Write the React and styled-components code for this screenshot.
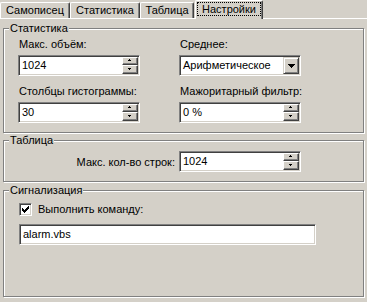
import React from 'react';
import styled, { createGlobalStyle } from 'styled-components';

const Global = createGlobalStyle`
  html, body { margin: 0; padding: 0; background: #D4D0C8; }
  body { font-family: "Liberation Sans", Arial, sans-serif; font-size: 11px; color: #000; }
  * { box-sizing: border-box; }
`;

const Window = styled.div`
  width: 367px;
  height: 302px;
  display: flex;
  flex-direction: column;
  background: #D4D0C8;
  overflow: hidden;
`;

const TabBar = styled.div`
  display: flex;
  align-items: flex-end;
  height: 18px;
  position: relative;
  z-index: 1;
`;

const Tab = styled.div`
  width: ${p => p.$w}px;
  height: ${p => (p.$active ? 19 : 16)}px;
  margin-left: ${p => (p.$active ? 1 : 0)}px;
  margin-bottom: ${p => (p.$active ? -1 : 0)}px;
  padding-bottom: ${p => (p.$active ? 2 : 0)}px;
  background: #D4D0C8;
  border-top: 1px solid #fff;
  border-left: 1px solid #fff;
  border-right: 1px solid #404040;
  border-radius: 2px 2px 0 0;
  box-shadow: inset -1px 0 0 #808080;
  display: flex;
  align-items: center;
  justify-content: center;
  line-height: 13px;
  white-space: nowrap;
`;

const Focus = styled.span`
  flex: 1;
  align-self: stretch;
  margin: 1px 1px 1px 1px;
  border: 1px dotted #000;
  display: flex;
  align-items: center;
  justify-content: center;
`;

const Panel = styled.div`
  flex: 1;
  border-top: 1px solid #fff;
  display: flex;
  flex-direction: column;
  padding: 9px 3px 5px 3px;
`;

const Group = styled.section`
  border: 1px solid #808080;
  box-shadow: inset 1px 1px 0 #fff, 1px 1px 0 #fff;
  display: flex;
  flex-direction: column;
  margin-top: ${p => p.$mt || 0}px;
  ${p => (p.$grow ? 'flex: 1;' : '')}
`;

const Legend = styled.div`
  align-self: flex-start;
  margin: -7px 0 0 5px;
  padding: 0 1px;
  height: 13px;
  line-height: 13px;
  background: #D4D0C8;
`;

const FieldGrid = styled.div`
  display: grid;
  grid-template-columns: 122px 122px;
  column-gap: 39px;
  row-gap: 9px;
  padding: 3px 0 9px 14px;
`;

const Field = styled.div`
  display: flex;
  flex-direction: column;
`;

const Label = styled.div`
  height: 13px;
  line-height: 13px;
  padding-left: 1px;
  margin-bottom: 4px;
  white-space: nowrap;
`;

const Sunken = styled.div`
  width: ${p => p.$w}px;
  height: 21px;
  background: #fff;
  border-top: 1px solid #808080;
  border-left: 1px solid #808080;
  border-right: 1px solid #fff;
  border-bottom: 1px solid #fff;
  box-shadow: inset 1px 1px 0 #404040, inset -1px -1px 0 #D4D0C8;
  padding: 1px;
  display: flex;
  align-items: stretch;
`;

const Value = styled.div`
  flex: 1;
  padding-left: 2px;
  line-height: 17px;
  white-space: nowrap;
  overflow: hidden;
`;

const SpinCol = styled.div`
  width: 16px;
  display: flex;
  flex-direction: column;
`;

const SpinBtn = styled.div`
  height: ${p => (p.$h ? `${p.$h}px` : 'auto')};
  ${p => (p.$h ? '' : 'flex: 1;')}
  background: #D4D0C8;
  border-top: 1px solid #fff;
  border-left: 1px solid #fff;
  border-right: 1px solid #404040;
  border-bottom: 1px solid #404040;
  box-shadow: inset -1px -1px 0 #808080;
  display: flex;
  align-items: center;
  justify-content: center;
  padding: 0 1px 1px 0;
`;

const DropBtn = styled.div`
  width: 16px;
  background: #D4D0C8;
  border-top: 1px solid #D4D0C8;
  border-left: 1px solid #D4D0C8;
  border-right: 1px solid #404040;
  border-bottom: 1px solid #404040;
  box-shadow: inset 1px 1px 0 #fff, inset -1px -1px 0 #808080;
  display: flex;
  align-items: center;
  justify-content: center;
`;

const TableRow = styled.div`
  display: flex;
  justify-content: flex-end;
  align-items: center;
  padding: 4px 62px 9px 0;
`;

const InlineLabel = styled.div`
  margin-right: 4px;
  white-space: nowrap;
`;

const AlarmBody = styled.div`
  display: flex;
  flex-direction: column;
  padding: 6px 0 0 15px;
`;

const CheckRow = styled.label`
  display: flex;
  align-items: center;
  height: 13px;
  gap: 6px;
  line-height: 13px;
`;

const CheckBox = styled.span`
  width: 13px;
  height: 13px;
  background: #fff;
  border-top: 1px solid #808080;
  border-left: 1px solid #808080;
  border-right: 1px solid #fff;
  border-bottom: 1px solid #fff;
  box-shadow: inset 1px 1px 0 #404040, inset -1px -1px 0 #D4D0C8;
  display: flex;
  align-items: center;
  justify-content: center;
`;

const TextRow = styled.div`
  margin-top: 8px;
`;

const ArrowUp = () => (
  <svg width="5" height="3" viewBox="0 0 5 3" shapeRendering="crispEdges">
    <rect x="2" y="0" width="1" height="1" fill="#000" />
    <rect x="1" y="1" width="3" height="1" fill="#000" />
  </svg>
);

const ArrowDown = () => (
  <svg width="5" height="3" viewBox="0 0 5 3" shapeRendering="crispEdges">
    <rect x="1" y="0" width="3" height="1" fill="#000" />
    <rect x="2" y="1" width="1" height="1" fill="#000" />
  </svg>
);

const ComboArrow = () => (
  <svg width="7" height="4" viewBox="0 0 7 4" shapeRendering="crispEdges">
    <rect x="0" y="0" width="7" height="1" fill="#000" />
    <rect x="1" y="1" width="5" height="1" fill="#000" />
    <rect x="2" y="2" width="3" height="1" fill="#000" />
    <rect x="3" y="3" width="1" height="1" fill="#000" />
  </svg>
);

const checkCols = [2, 3, 4, 3, 2, 1, 0];
const CheckMark = () => (
  <svg width="7" height="7" viewBox="0 0 7 7" shapeRendering="crispEdges">
    {checkCols.map((y, x) => (
      <rect key={x} x={x} y={y} width="1" height="3" fill="#000" />
    ))}
  </svg>
);

const SpinBox = ({ value, w = 122 }) => (
  <Sunken $w={w}>
    <Value>{value}</Value>
    <SpinCol>
      <SpinBtn $h={8}><ArrowUp /></SpinBtn>
      <SpinBtn><ArrowDown /></SpinBtn>
    </SpinCol>
  </Sunken>
);

const Combo = ({ value, w = 122 }) => (
  <Sunken $w={w}>
    <Value>{value}</Value>
    <DropBtn><ComboArrow /></DropBtn>
  </Sunken>
);

const tabs = [
  { label: 'Самописец', w: 70 },
  { label: 'Статистика', w: 70 },
  { label: 'Таблица', w: 54 },
  { label: 'Настройки', w: 68, active: true },
];

export default function App() {
  return (
    <>
      <Global />
      <Window>
        <TabBar>
          {tabs.map(t => (
            <Tab key={t.label} $w={t.w} $active={t.active}>
              {t.active ? <Focus>{t.label}</Focus> : t.label}
            </Tab>
          ))}
        </TabBar>
        <Panel>
          <Group>
            <Legend>Статистика</Legend>
            <FieldGrid>
              <Field>
                <Label>Макс. объём:</Label>
                <SpinBox value="1024" />
              </Field>
              <Field>
                <Label>Среднее:</Label>
                <Combo value="Арифметическое" />
              </Field>
              <Field>
                <Label>Столбцы гистограммы:</Label>
                <SpinBox value="30" />
              </Field>
              <Field>
                <Label>Мажоритарный фильтр:</Label>
                <SpinBox value="0 %" />
              </Field>
            </FieldGrid>
          </Group>
          <Group $mt={7}>
            <Legend>Таблица</Legend>
            <TableRow>
              <InlineLabel>Макс. кол-во строк:</InlineLabel>
              <SpinBox value="1024" />
            </TableRow>
          </Group>
          <Group $mt={8} $grow>
            <Legend>Сигнализация</Legend>
            <AlarmBody>
              <CheckRow>
                <CheckBox><CheckMark /></CheckBox>
                Выполнить команду:
              </CheckRow>
              <TextRow>
                <Sunken $w={297}>
                  <Value>alarm.vbs</Value>
                </Sunken>
              </TextRow>
            </AlarmBody>
          </Group>
        </Panel>
      </Window>
    </>
  );
}
